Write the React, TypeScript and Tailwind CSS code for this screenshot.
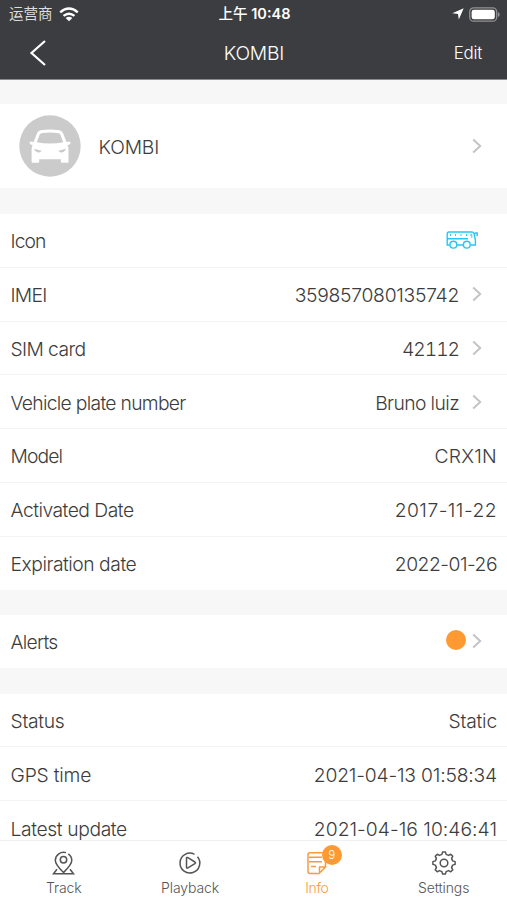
import React from "react";

type RowProps = {
  label: string;
  labelClass?: string;
  value?: string;
  valueClass?: string;
  arrow?: boolean;
  children?: React.ReactNode;
};

function Chevron() {
  return (
    <svg className="h-[16px] w-[10px] shrink-0" viewBox="0 0 10 16" fill="none" stroke="#c4c4c6" strokeWidth="2">
      <path d="M1.2 1.6 8.2 8l-7 6.4" />
    </svg>
  );
}

function Row({ label, labelClass = "", value, valueClass = "", arrow, children }: RowProps) {
  return (
    <div className="flex h-[53.75px] shrink-0 items-center justify-between border-b border-[#f3f3f3] bg-white pl-[10.5px] pr-[10px] last:h-[53px] last:border-b-0">
      <span className={`pt-[2px] whitespace-nowrap ${labelClass}`}>{label}</span>
      <div className="flex items-center">
        {value && <span className={`pt-[2px] whitespace-nowrap ${valueClass}`}>{value}</span>}
        {children}
        {arrow && (
          <span className="ml-[13px] mr-[15px] flex">
            <Chevron />
          </span>
        )}
      </div>
    </div>
  );
}

function BusIcon() {
  return (
    <svg className="mr-[19px] mb-px h-[18px] w-[32px]" viewBox="0 0 32 18" fill="none" stroke="#22c8f5" strokeWidth="1.4">
      <path d="M3.8 14H1.2V3Q1.2 1 3 1H26q1.700 0 2.200 2L29.400 9v5h-4.800M11 14h6.600M1.200 7.800H22M28 3l1.500-1h1.700v3.200" />
      <path d="M4.500 3.200v1.800M9.500 3.200v1.800M15 3.200v1.800M20.500 3.200v1.800" strokeWidth="1" />
      <path d="M24 4.500l1.800-1.200v3.500" strokeWidth=".9" />
      <circle cx="7.400" cy="13.700" r="3.400" />
      <circle cx="20.800" cy="13.700" r="3.400" />
    </svg>
  );
}

function CarAvatar() {
  return (
    <svg className="size-[62px]" viewBox="0 0 62 62">
      <circle cx="31" cy="31" r="30.700" fill="#cbcbcb" />
      <path
        fill="#fff"
        d="M21.500 15.200Q31 13.800 40.500 15.200 43 15.700 44.200 18.500L47.500 27l2.700-.6q1.800.3 1.300 2-.6 1.400-3 1.700 1 2 1 4.200V47q0 .8-.8.800h-6q-.8 0-.8-.8v-2.700H20.200V47q0 .8-.8.800h-6q-.8 0-.8-.8V34.300q0-2.200 1-4.200-2.400-.3-3-1.700-.5-1.700 1.300-2l2.700.6 3.300-8.500q1.200-2.800 3.600-3.300Z"
      />
      <path fill="#cbcbcb" d="M22.500 18.200q8.500-1.200 17 0 1.400.3 2 1.700l2.700 7.300Q31 29.800 17.800 27.200l2.700-7.300q.6-1.400 2-1.700ZM15 33.700l7.500 2q-.5 1.700-2.500 1.700-3.500.2-5-3.700ZM47 33.700l-7.500 2q.5 1.700 2.500 1.700 3.500.2 5-3.700Z" />
    </svg>
  );
}

function Wifi() {
  return (
    <svg className="h-[15px] w-[20px]" viewBox="0 0 20 15" fill="none" stroke="#fff" strokeWidth="2.400">
      <path d="M1.200 5.300Q10-2.300 18.800 5.300M4.500 8.900q5.500-4.500 11 0" />
      <path d="M10 14.300 6.600 11q3.400-2.700 6.800 0Z" fill="#fff" stroke="none" />
    </svg>
  );
}

function Tab({ label, active, children, labelClass = "" }: { label: string; active?: boolean; children: React.ReactNode; labelClass?: string }) {
  return (
    <div className={`flex flex-col items-center pt-[9px] ${active ? "text-[#fb9a3c]" : "text-[#555]"}`}>
      <div className="relative size-[26px]">{children}</div>
      <span className={`mt-[3px] text-[14px] leading-[18px] ${labelClass}`}>{label}</span>
    </div>
  );
}

export default function App() {
  return (
    <div className="flex h-[900px] w-[507px] flex-col overflow-hidden bg-[#f7f7f7] font-['Inter','Liberation_Sans','Noto_Sans_CJK_SC',sans-serif] text-[19.3px] leading-[24px] font-light text-[#3c3c3c]">
      <header className="h-[80px] shrink-0 border-b border-[#8b8b8d] bg-[#3c3d40] text-white">
        <div className="grid h-[28px] grid-cols-3 items-center pl-[9px] pr-[7px] text-[14.500px]">
          <div className="flex items-center gap-[6px] text-[#dedede]">
            <span className="font-normal">运营商</span>
            <Wifi />
          </div>
          <div className="text-center font-semibold whitespace-nowrap">
            <span className="font-medium">上午</span> 10:48
          </div>
          <div className="flex items-center justify-end gap-[5px]">
            <svg className="size-[12px]" viewBox="0 0 12 12" fill="#fff">
              <path d="M11.700.3 6.800 11.500 6 6 .3 5.200Z" />
            </svg>
            <svg className="h-[15px] w-[31px]" viewBox="0 0 31 15">
              <rect x=".7" y=".8" width="27" height="13.400" rx="4" fill="none" stroke="#929294" strokeWidth="1.300" />
              <rect x="2.600" y="2.700" width="23.200" height="9.600" rx="2.300" fill="#fff" />
              <path d="M29 5q1.700.8 1.700 2.500T29 10Z" fill="#929294" />
            </svg>
          </div>
        </div>
        <div className="grid h-[50px] grid-cols-3 items-center pl-[28px] pr-[27px]">
          <svg className="h-[28px] w-[19px]" viewBox="0 0 19 28" fill="none" stroke="#fff" strokeWidth="2.200">
            <path d="M17 2 3.500 14 17 26" />
          </svg>
          <span className="text-center tracking-[-0.2px]">KOMBI</span>
          <span className="-mr-[2px] text-right text-[17px] tracking-[-0.3px]">Edit</span>
        </div>
      </header>

      <section className="mt-[24px] flex h-[84px] shrink-0 items-center bg-white pl-[19px] pr-[25px]">
        <CarAvatar />
        <span className="ml-[17.500px] flex-1 pt-[2px] tracking-[-0.15px]">KOMBI</span>
        <Chevron />
      </section>

      <section className="mt-[26px] shrink-0">
        <Row label="Icon" labelClass="tracking-[-0.9px]">
          <BusIcon />
        </Row>
        <Row label="IMEI" labelClass="tracking-[-0.7px]" value="359857080135742" valueClass="tracking-[-0.27px]" arrow />
        <Row label="SIM card" labelClass="tracking-[-0.6px]" value="42112" valueClass="tabular-nums tracking-[-1.05px]" arrow />
        <Row label="Vehicle plate number" labelClass="tracking-[-0.7px]" value="Bruno luiz" valueClass="tracking-[-0.6px]" arrow />
        <Row label="Model" labelClass="tracking-[-0.9px]" value="CRX1N" valueClass="tracking-[0.25px]" />
        <Row label="Activated Date" labelClass="tracking-[-0.5px]" value="2017-11-22" valueClass="tracking-[0.45px]" />
        <Row label="Expiration date" labelClass="tracking-[-0.47px]" value="2022-01-26" valueClass="tracking-[-0.5px]" />
      </section>

      <section className="mt-[25px] shrink-0">
        <Row label="Alerts" labelClass="tracking-[-0.75px]" arrow>
          <span className="mb-[2px] -mr-[7px] size-[20px] rounded-full bg-[#ff9a33]" />
        </Row>
      </section>

      <section className="mt-[26px] min-h-0 flex-1 overflow-hidden bg-white">
        <Row label="Status" labelClass="tracking-[-0.3px]" value="Static" valueClass="tracking-[-0.2px]" />
        <Row label="GPS time" labelClass="tracking-[-0.2px]" value="2021-04-13 01:58:34" valueClass="tracking-[-0.19px]" />
        <Row label="Latest update" labelClass="tracking-[-0.38px]" value="2021-04-16 10:46:41" valueClass="tracking-[0.02px]" />
      </section>

      <nav className="grid h-[60px] shrink-0 grid-cols-4 border-t border-[#f0f0f0] bg-white">
        <Tab label="Track" labelClass="tracking-[-0.1px] translate-x-[0.5px]">
          <svg className="size-[26px] translate-x-[0.5px]" viewBox="0 0 26 26" fill="none" stroke="currentColor" strokeWidth="1.500">
            <path d="M15.500 2.600A8.300 8.300 0 0 0 4.800 10.300C4.800 14.700 9 18.500 13 22.500c4-4 8.300-7.800 8.300-12.200a8.200 8.200 0 0 0-3.500-6.500" />
            <circle cx="13" cy="9.700" r="3.200" />
            <path d="M6.500 19.200 3 23.800h20l-3.500-4.600" />
          </svg>
        </Tab>
        <Tab label="Playback" labelClass="tracking-[-0.1px]">
          <svg className="size-[26px]" viewBox="0 0 26 26" fill="none" stroke="currentColor" strokeWidth="1.500">
            <path d="M17.500 4.300A9.900 9.900 0 1 0 20.500 6.700" />
            <path d="M9.500 8.500q0-1.600 1.400-.8l7 4.300q1.200.8 0 1.600l-7 4.300q-1.400.8-1.400-.8Z" />
          </svg>
        </Tab>
        <Tab label="Info" active labelClass="tracking-[-0.4px]">
          <svg className="size-[26px]" viewBox="0 0 26 26" fill="none" stroke="currentColor" strokeWidth="1.500">
            <path d="M19 2.700H6Q4 2.700 4 4.700V21.500q0 2 2 2h8.500M21.500 10v7l-6 6V17h6M5 7.200H18M5 11.800H18M7 16.500h5" />
          </svg>
          <span className="absolute top-[-5px] left-[18px] flex size-[20px] items-center justify-center rounded-full bg-[#ff9a33] text-[11px] leading-none text-white">9</span>
        </Tab>
        <Tab label="Settings" labelClass="tracking-[-0.1px]">
          <svg className="size-[26px]" viewBox="0 0 26 26" fill="none" stroke="currentColor" strokeWidth="1.500" strokeLinejoin="round">
            <path d="M10.900 4.400 11.600 1.900h2.800l.7 2.500 2.500 1 2.200-1.200 2 2-1.200 2.200 1 2.500 2.500.7v2.800l-2.500.7-1 2.500 1.200 2.200-2 2-2.200-1.200-2.500 1-.7 2.500h-2.800l-.7-2.500-2.500-1-2.200 1.200-2-2 1.200-2.200-1-2.500-2.500-.7v-2.800l2.500-.7 1-2.500-1.200-2.200 2-2 2.200 1.200Z" />
            <circle cx="13" cy="13" r="3.800" />
          </svg>
        </Tab>
      </nav>
    </div>
  );
}
